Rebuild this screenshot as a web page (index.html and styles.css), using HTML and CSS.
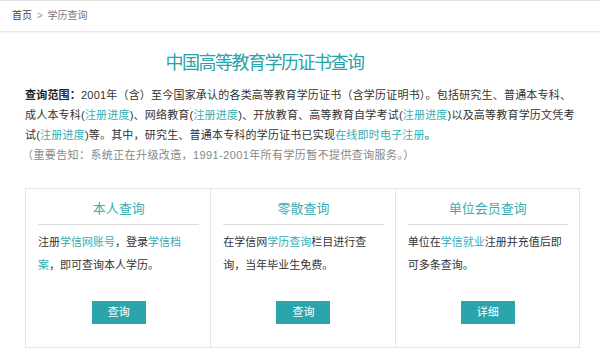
FILE: index.html
```html
<html>
<head>
  <meta charset="UTF-8">
  <meta name="viewport" content="width=device-width, initial-scale=1.0">
  <title>学历查询</title>
  <link rel="stylesheet" href="styles.css">
</head>
<body>

  <div class="crumb">
    <a href="#">首页</a> <span class="sep">&gt;</span> <span class="here">学历查询</span>
  </div>

  <div class="main">
    <h1 class="title">中国高等教育学历证书查询</h1>

    <p class="intro">
      <b>查询范围：</b>2001年（含）至今国家承认的各类高等教育学历证书（含学历证明书）。包括研究生、普通本专科、<br>
      成人本专科(<a href="#">注册进度</a>)、网络教育(<a href="#">注册进度</a>)、开放教育、高等教育自学考试(<a href="#">注册进度</a>)以及高等教育学历文凭考<br>
      试(<a href="#">注册进度</a>)等。其中，研究生、普通本专科的学历证书已实现<a href="#">在线即时电子注册</a>。
    </p>
    <p class="notice">（重要告知：系统正在升级改造，1991-2001年所有学历暂不提供查询服务。）</p>

    <div class="cards">
      <div class="card">
        <h3>本人查询</h3>
        <p>注册<a href="#">学信网账号</a>，登录<a href="#">学信档</a><br><a href="#">案</a>，即可查询本人学历。</p>
        <a class="btn" href="#">查询</a>
      </div>
      <div class="card">
        <h3>零散查询</h3>
        <p>在学信网<a href="#">学历查询</a>栏目进行查<br>询，当年毕业生免费。</p>
        <a class="btn" href="#">查询</a>
      </div>
      <div class="card">
        <h3>单位会员查询</h3>
        <p>单位在<a href="#">学信就业</a>注册并充值后即<br>可多条查询。</p>
        <a class="btn" href="#">详细</a>
      </div>
    </div>
  </div>

</body>
</html>
```

FILE: styles.css
```css
body {
  margin: 0;
  background: #fff;
  color: #333;
  font-family: "Liberation Sans", "Noto Sans CJK SC", sans-serif;
}

a {
  color: #35adb4;
  text-decoration: none;
}

.crumb {
  height: 30px;
  line-height: 30px;
  padding-left: 12px;
  font-size: 10px;
  color: #777;
  border-top: 1px solid #e2e2e2;
  border-bottom: 1px solid #e8e8e8;
  box-shadow: 0 1px 2px rgba(0, 0, 0, 0.05);
}

.crumb a {
  color: #444;
}

.crumb .sep {
  color: #999;
  margin: 0 2px;
}

.main {
  padding: 0 18px 0 25px;
}

.title {
  margin: 19px 0 0;
  padding-right: 78px;
  text-align: center;
  font-size: 18px;
  font-weight: normal;
  letter-spacing: -1.5px;
  line-height: 24px;
  color: #27a3a9;
}

.intro {
  margin: 10px 0 0;
  font-size: 11px;
  letter-spacing: 0.2px;
  line-height: 20px;
  white-space: nowrap;
}

.intro b {
  font-weight: bold;
  color: #222;
}

.notice {
  margin: 0 0 0 -3px;
  font-size: 11px;
  letter-spacing: 0.4px;
  line-height: 20px;
  color: #888;
}

.cards {
  display: grid;
  grid-template-columns: repeat(3, 1fr);
  margin: 23px 2px 0 0;
  border: 1px solid #e4e4e4;
}

.card {
  padding: 11px 11px 23px 12px;
  border-left: 1px solid #e4e4e4;
}

.card:first-child {
  border-left: none;
}

.card h3 {
  margin: 0;
  padding-bottom: 6px;
  border-bottom: 1px solid #dedede;
  text-align: center;
  font-size: 13px;
  font-weight: normal;
  line-height: 18px;
  color: #3aaeb2;
}

.card p {
  margin: 6px 0 0;
  height: 46px;
  font-size: 11px;
  line-height: 23px;
}

.btn {
  display: block;
  width: 54px;
  height: 23px;
  margin: 24px auto 0;
  background: #2aa5ab;
  color: #fff;
  font-size: 11px;
  line-height: 23px;
  text-align: center;
}
```
